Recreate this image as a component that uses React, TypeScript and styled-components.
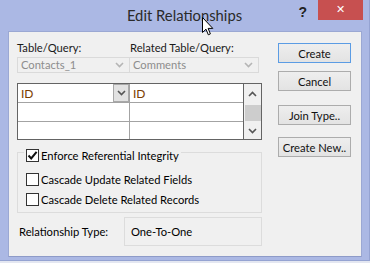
import React from "react";
import styled, { createGlobalStyle } from "styled-components";

const Global = createGlobalStyle`
  html, body {
    margin: 0;
    padding: 0;
    background: #e4e7f1;
  }
  body {
    font-family: Lato, "Liberation Sans", sans-serif;
    font-size: 11.2px;
    color: #000;
  }
`;

const Chevron = ({ up, color = "#555" }: { up?: boolean; color?: string }) => (
  <svg width="9" height="6" viewBox="0 0 9 6">
    <path
      d={up ? "M1 5 L4.5 1.5 L8 5" : "M1 1 L4.5 4.5 L8 1"}
      fill="none"
      stroke={color}
      strokeWidth="1.6"
    />
  </svg>
);

const Pointer = () => (
  <CursorSvg width="12" height="19" viewBox="0 0 12 19">
    <path
      d="M0.5 0.5 L0.5 15.5 L4 12.2 L6.3 17.8 L8.4 16.9 L6.1 11.4 L10.8 11.4 Z"
      fill="#fff"
      stroke="#000"
      strokeWidth="1"
      strokeLinejoin="round"
    />
  </CursorSvg>
);

const App = () => {
  return (
    <>
      <Global />
      <Window>
        <TitleBar>
          <span />
          <Title>Edit Relationships</Title>
          <Controls>
            <Help>?</Help>
            <Close>✕</Close>
          </Controls>
        </TitleBar>

        <Client>
          <LeftCol>
            <LabelRow>
              <span>Table/Query:</span>
              <span>Related Table/Query:</span>
            </LabelRow>

            <ComboRow>
              <Combo>
                Contacts_1
                <Chevron color="#b5b5b5" />
              </Combo>
              <Combo>
                Comments
                <Chevron color="#b5b5b5" />
              </Combo>
            </ComboRow>

            <FieldGrid>
              <Rows>
                <Row>
                  <Cell first>
                    ID
                    <DropBtn>
                      <Chevron />
                    </DropBtn>
                  </Cell>
                  <Cell>ID</Cell>
                </Row>
                <Row>
                  <Cell first />
                  <Cell />
                </Row>
                <Row last>
                  <Cell first />
                  <Cell />
                </Row>
              </Rows>
              <ScrollBar>
                <Chevron up />
                <Thumb />
                <Chevron />
              </ScrollBar>
            </FieldGrid>

            <GroupBox>
              <Caption>
                <Check checked />
                Enforce Referential Integrity
              </Caption>
              <CheckRow>
                <Check />
                Cascade Update Related Fields
              </CheckRow>
              <CheckRow>
                <Check />
                Cascade Delete Related Records
              </CheckRow>
            </GroupBox>

            <TypeRow>
              <TypeLabel>Relationship Type:</TypeLabel>
              <TypeValue>One-To-One</TypeValue>
            </TypeRow>
          </LeftCol>

          <RightCol>
            <Button primary gap={2}>Create</Button>
            <Button gap={8}>Cancel</Button>
            <Button gap={14}>Join Type..</Button>
            <Button gap={12}>Create New..</Button>
          </RightCol>
        </Client>

        <Pointer />
      </Window>
    </>
  );
};

const Check = ({ checked }: { checked?: boolean }) => (
  <Box>
    {checked && (
      <svg width="11" height="11" viewBox="0 0 11 11">
        <path d="M1.5 5.5 L4.2 8.4 L9.6 1.8" fill="none" stroke="#111" strokeWidth="2" />
      </svg>
    )}
  </Box>
);

export default App;

const Window = styled.div`
  position: relative;
  width: 370px;
  height: 261px;
  background: #abb8e4;
  box-sizing: border-box;
  border-right: 1px solid #95a3d2;
  border-bottom: 1px solid #95a3d2;
`;

const TitleBar = styled.div`
  height: 31px;
  display: grid;
  grid-template-columns: 1fr auto 1fr;
  align-items: start;
`;

const Title = styled.div`
  font-family: Lato, "Liberation Sans", sans-serif;
  font-size: 14.8px;
  line-height: 31px;
  color: #2a2a2a;
`;

const Controls = styled.div`
  justify-self: end;
  display: flex;
  align-items: flex-start;
  margin-right: 6px;
`;

const Help = styled.div`
  font-family: "Liberation Sans", sans-serif;
  font-weight: bold;
  font-size: 14px;
  line-height: 24px;
  color: #222;
  margin-right: 11px;
`;

const Close = styled.div`
  width: 45px;
  height: 20px;
  background: #c75050;
  color: #fff;
  font-family: "DejaVu Sans", sans-serif;
  font-weight: bold;
  font-size: 11px;
  line-height: 20px;
  text-align: center;
`;

const CursorSvg = styled.svg`
  position: absolute;
  left: 202px;
  top: 17px;
`;

const Client = styled.div`
  margin: 0 7px 0 8px;
  height: 226px;
  box-sizing: border-box;
  background: #f0f0f0;
  border: 1px solid #9ba8d3;
  border-bottom-color: #8e9bc8;
  padding: 9px 0 0 8px;
  display: flex;
  gap: 16px;
`;

const LeftCol = styled.div`
  width: 245px;
  display: flex;
  flex-direction: column;
`;

const LabelRow = styled.div`
  display: grid;
  grid-template-columns: 113px 1fr;
  line-height: 14px;
  color: #1a1a1a;
`;

const ComboRow = styled.div`
  margin-top: 2px;
  width: 242px;
  display: grid;
  grid-template-columns: 112px 1fr;
`;

const Combo = styled.div`
  height: 16px;
  box-sizing: border-box;
  border: 1px solid #dadada;
  border-right: none;
  padding: 0 5px 0 3px;
  display: flex;
  align-items: center;
  justify-content: space-between;
  color: #8d8d8d;
  line-height: 14px;

  & + & {
    border-left: 1px solid #dadada;
    border-right: 1px solid #dadada;
  }
`;

const FieldGrid = styled.div`
  margin-top: 10px;
  height: 57px;
  box-sizing: border-box;
  border: 1px solid #646464;
  background: #fff;
  display: flex;
`;

const Rows = styled.div`
  flex: 1;
  display: flex;
  flex-direction: column;
`;

const Row = styled.div<{ last?: boolean }>`
  height: ${(p) => (p.last ? 17 : 18)}px;
  display: flex;
  border-bottom: ${(p) => (p.last ? "none" : "1px solid #a3a3a3")};
`;

const Cell = styled.div<{ first?: boolean }>`
  box-sizing: border-box;
  width: ${(p) => (p.first ? "112px" : "auto")};
  flex: ${(p) => (p.first ? "none" : "1")};
  border-right: ${(p) => (p.first ? "1px solid #a3a3a3" : "none")};
  display: flex;
  align-items: center;
  justify-content: space-between;
  padding-left: 3px;
  color: #7a3d00;
  font-size: 12px;
`;

const DropBtn = styled.div`
  width: 16px;
  height: 18px;
  box-sizing: border-box;
  border: 1px solid #a8a8a8;
  background: #e2e2e2;
  display: flex;
  align-items: center;
  justify-content: center;
`;

const ScrollBar = styled.div`
  width: 18px;
  border-left: 1px solid #646464;
  background: #f0f0f0;
  display: flex;
  flex-direction: column;
  align-items: center;
  justify-content: space-between;
  padding: 7px 0 5px;
  box-sizing: border-box;
`;

const Thumb = styled.div`
  width: 16px;
  height: 16px;
  background: #cdcdcd;
`;

const GroupBox = styled.div`
  margin-top: 12px;
  height: 61px;
  box-sizing: border-box;
  border: 1px solid #dcdcdc;
  display: flex;
  flex-direction: column;
  align-items: flex-start;
`;

const Caption = styled.div`
  margin: -4px 0 0 6px;
  padding: 0 2px;
  background: #f0f0f0;
  height: 13px;
  display: flex;
  align-items: center;
  gap: 2px;
`;

const CheckRow = styled.div`
  height: 20px;
  margin-left: 8px;
  display: flex;
  align-items: center;
  gap: 2px;

  &:nth-of-type(2) {
    margin-top: 7px;
  }
`;

const Box = styled.div`
  width: 13px;
  height: 13px;
  box-sizing: border-box;
  border: 1px solid #333;
  background: #fff;
  display: flex;
  align-items: center;
  justify-content: center;
`;

const TypeRow = styled.div`
  margin-top: 4px;
  display: flex;
  align-items: center;
`;

const TypeLabel = styled.div`
  width: 105px;
  padding-left: 2px;
`;

const TypeValue = styled.div`
  width: 138px;
  height: 29px;
  box-sizing: border-box;
  border: 1px solid #dcdcdc;
  padding-left: 6px;
  display: flex;
  align-items: center;
`;

const RightCol = styled.div`
  width: 73px;
  display: flex;
  flex-direction: column;
`;

const Button = styled.div<{ primary?: boolean; gap: number }>`
  margin-top: ${(p) => p.gap}px;
  height: 20px;
  box-sizing: border-box;
  border: 1px solid ${(p) => (p.primary ? "#5b9ce4" : "#acacac")};
  background: linear-gradient(#eeeeee, #e3e3e3);
  display: flex;
  align-items: center;
  justify-content: center;
  color: #111;
  white-space: nowrap;
`;
